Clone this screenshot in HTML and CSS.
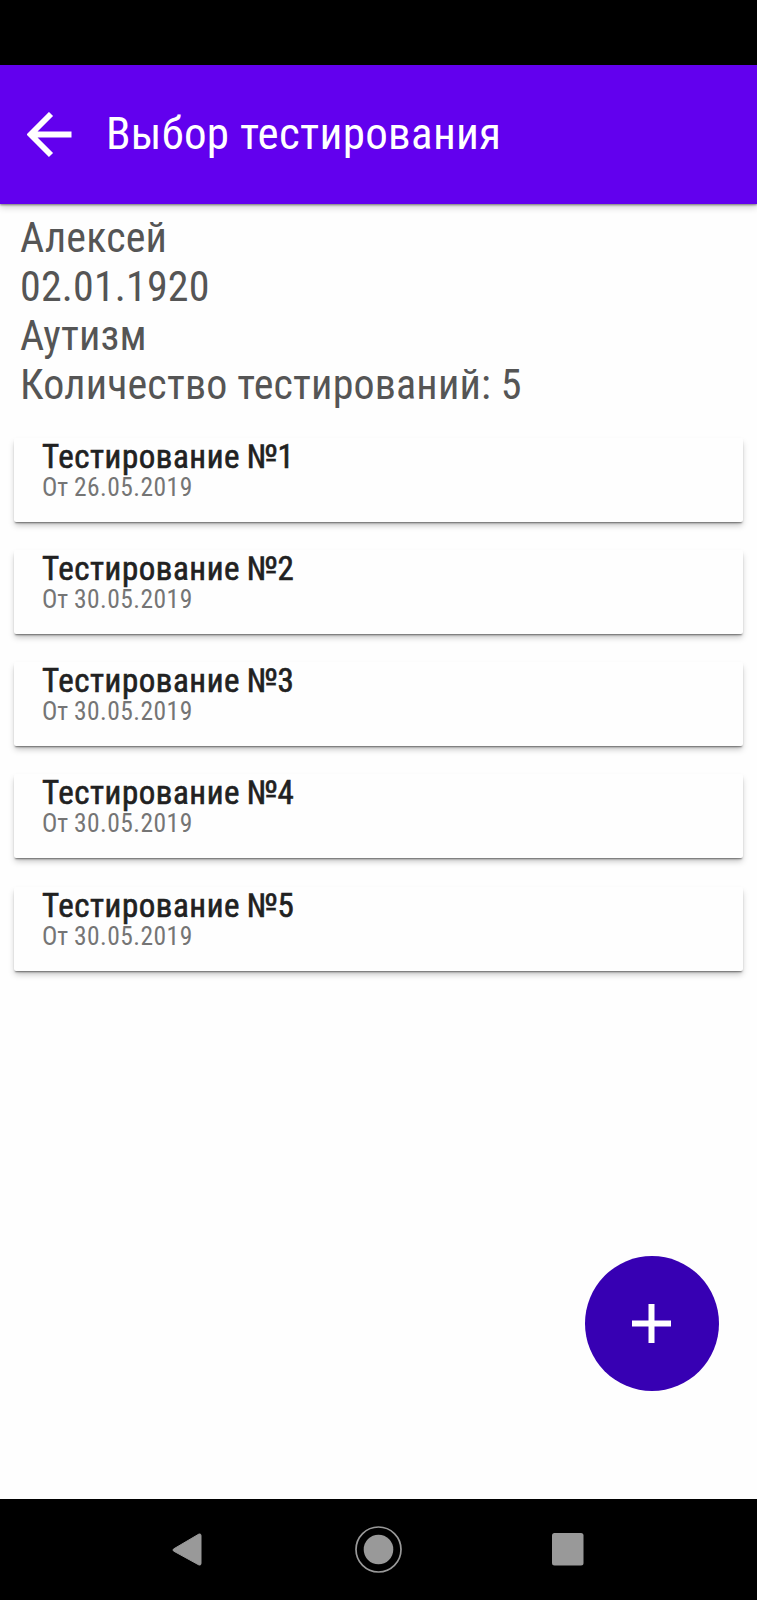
FILE: index.html
```html
<!DOCTYPE html>
<html lang="ru">
<head>
<meta charset="utf-8">
<title>Выбор тестирования</title>
<link rel="stylesheet" href="styles.css">
</head>
<body>
<div class="screen">
  <div class="status"></div>
  <header class="appbar">
    <svg class="back" width="46" height="46" viewBox="0 0 46 46"><path d="M44.500 22.500H3.500M24 2L3.500 22.500l20.500 20.500" fill="none" stroke="#fff" stroke-width="5.800"/></svg>
    <h1 class="title">Выбор тестирования</h1>
  </header>
  <main class="content">
    <section class="patient">
      <p>Алексей</p>
      <p>02.01.1920</p>
      <p>Аутизм</p>
      <p>Количество тестирований: 5</p>
    </section>
    <section class="list">
      <article class="card"><h2>Тестирование <span class="num">№</span>1</h2><p>От <span class="date">26.05.2019</span></p></article>
      <article class="card"><h2>Тестирование <span class="num">№</span>2</h2><p>От <span class="date">30.05.2019</span></p></article>
      <article class="card"><h2>Тестирование <span class="num">№</span>3</h2><p>От <span class="date">30.05.2019</span></p></article>
      <article class="card"><h2>Тестирование <span class="num">№</span>4</h2><p>От <span class="date">30.05.2019</span></p></article>
      <article class="card"><h2>Тестирование <span class="num">№</span>5</h2><p>От <span class="date">30.05.2019</span></p></article>
    </section>
    <button class="fab" aria-label="Добавить"><svg width="39" height="39" viewBox="0 0 39 39"><path d="M19.500 0v39M0 19.500h39" stroke="#fff" stroke-width="6"/></svg></button>
  </main>
  <nav class="navbar">
    <svg width="30" height="34" viewBox="0 0 30 34"><path d="M1.500 16L27 1Q29 .5 29 2.500V30.500Q29 32.500 27 32L1.500 18Q.5 17 1.500 16Z" fill="#999" stroke="#999"/></svg>
    <svg width="48" height="48" viewBox="0 0 48 48"><circle cx="23.500" cy="23.500" r="22.500" fill="none" stroke="#999" stroke-width="1.700"/><circle cx="23.500" cy="23.500" r="14.800" fill="#999"/></svg>
    <svg width="32" height="33" viewBox="0 0 32 33"><rect width="31.500" height="32.500" rx="2.500" fill="#999"/></svg>
  </nav>
</div>
</body>
</html>
```
FILE: styles.css
```css
* { box-sizing: border-box; }
body, h1, h2, p { margin: 0; }
body { font-family: "Roboto Condensed", Roboto, sans-serif; font-stretch: 75%; background: #fefefe; }
.screen { display: flex; flex-direction: column; width: 757px; height: 1600px; overflow: hidden; }
.status { height: 65px; background: #000; }
.appbar { height: 139px; display: flex; align-items: center; padding-left: 27px; gap: 33px; background: #6200ee; box-shadow: 0 1px 2px rgba(0,0,0,.45), 0 3px 7px rgba(0,0,0,.2); position: relative; }
.back { display: block; }
.title { font-size: 45px; font-weight: 400; line-height: 54px; letter-spacing: .3px; color: #fff; white-space: nowrap; padding-bottom: 1px; }
.content { flex: 1; position: relative; padding: 9px 14px 0; }
.patient { padding: 0 6px; color: #555; font-size: 42px; line-height: 49px; letter-spacing: .16px; white-space: nowrap; }
.list { display: flex; flex-direction: column; gap: 28.250px; margin-top: 28.500px; }
.card { height: 84px; padding-left: 28px; background: #fefefe; border-radius: 2px; box-shadow: 0 2px 2px -1px rgba(0,0,0,.5), 0 4px 6px -1px rgba(0,0,0,.25); white-space: nowrap; }
.card h2 { font-size: 33px; font-weight: 400; line-height: 37px; letter-spacing: .55px; color: #212121; -webkit-text-stroke: .6px #212121; }
.num { display: inline-block; line-height: 1; letter-spacing: 0; transform: scaleX(1.08); -webkit-text-stroke: .4px #212121; }
.card p { font-size: 25.500px; line-height: 24px; color: #757575; }
.date { letter-spacing: .45px; }
.fab { position: absolute; right: 38px; bottom: 108px; width: 134px; height: 135px; padding: 0 1px 0 0; border: 0; border-radius: 50%; background: #3700b3; display: flex; align-items: center; justify-content: center; }
.navbar { height: 101px; background: #000; display: flex; align-items: center; padding-left: 172px; }
.navbar svg { display: block; }
.navbar svg:nth-child(2) { margin-left: 153px; }
.navbar svg:nth-child(3) { margin-left: 149px; }
```
